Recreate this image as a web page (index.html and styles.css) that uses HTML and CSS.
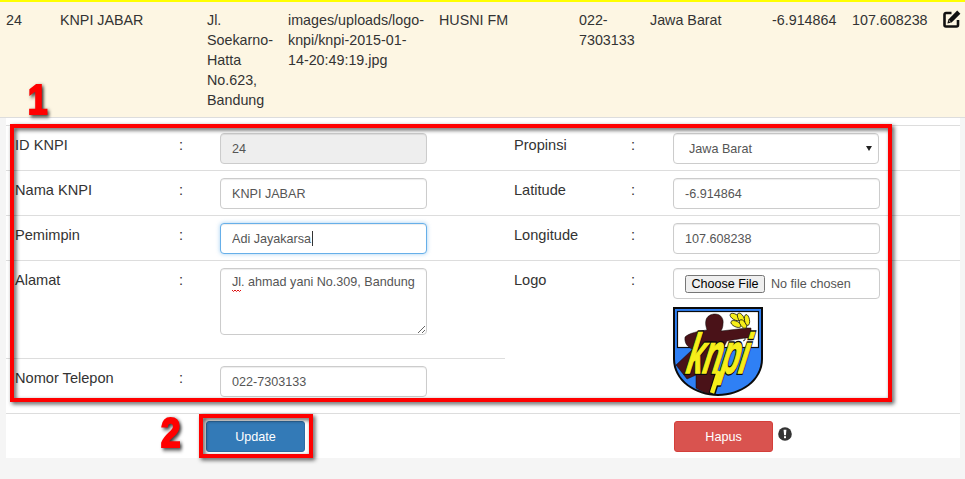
FILE: index.html
```html
<!DOCTYPE html>
<html lang="en">

<head>
    <meta charset="UTF-8">
    <meta name="viewport" content="width=device-width, initial-scale=1.0">
    <title>Data KNPI</title>
    <link rel="stylesheet" href="styles.css">
</head>

<body>
    <div class="page">
        <div class="data-row">
            <div>24</div>
            <div>KNPI JABAR</div>
            <div>Jl. Soekarno-Hatta No.623, Bandung</div>
            <div>images/uploads/logo-knpi/knpi-2015-01-14-20:49:19.jpg</div>
            <div>HUSNI FM</div>
            <div>022-7303133</div>
            <div>Jawa Barat</div>
            <div>-6.914864</div>
            <div>107.608238</div>
            <div>
                <svg class="edit-icon" viewBox="0 0 18 18">
                    <path d="M8.500 3H3A1.500 1.500 0 0 0 1.500 4.500V15A1.500 1.500 0 0 0 3 16.500H13.500A1.500 1.500 0 0 0 15 15V10" fill="none" stroke="#111" stroke-width="2.600" />
                    <path d="M14.200 .6l3.200 3.200-8.800 8.800-4.200 1 1-4.200z" fill="#111" />
                    <path d="M5.900 10.500l1.600 1.600" stroke="#fdf6e3" stroke-width="0.800" />
                </svg>
            </div>
        </div>

        <div class="panel">
            <div class="form-cols">
                <div class="col">
                    <div class="form-row">
                        <label>ID KNPI</label><span class="colon">:</span>
                        <input class="form-control" type="text" value="24" disabled>
                    </div>
                    <div class="form-row">
                        <label>Nama KNPI</label><span class="colon">:</span>
                        <input class="form-control" type="text" value="KNPI JABAR">
                    </div>
                    <div class="form-row">
                        <label>Pemimpin</label><span class="colon">:</span>
                        <div class="field-wrap">
                            <input class="form-control" type="text" value="Adi Jayakarsa" autofocus>
                            <span class="text-caret"></span>
                        </div>
                    </div>
                    <div class="form-row row-alamat">
                        <label>Alamat</label><span class="colon">:</span>
                        <div class="field-wrap">
                            <textarea class="form-control" spellcheck="false">Jl. ahmad yani No.309, Bandung</textarea>
                            <svg class="squiggle" viewBox="0 0 10 3">
                                <path d="M0 1l1.500 1.500L3 1l1.500 1.500L6 1l1.500 1.500L9 1" fill="none" stroke="#e01010" stroke-width="1" />
                            </svg>
                        </div>
                    </div>
                    <div class="form-row row-telepon">
                        <label>Nomor Telepon</label><span class="colon">:</span>
                        <input class="form-control" type="text" value="022-7303133">
                    </div>
                </div>

                <div class="col col-right">
                    <div class="form-row">
                        <label>Propinsi</label><span class="colon">:</span>
                        <div class="field-wrap select-wrap">
                            <select class="form-control select-control">
                                <option>Jawa Barat</option>
                            </select>
                        </div>
                    </div>
                    <div class="form-row">
                        <label>Latitude</label><span class="colon">:</span>
                        <input class="form-control" type="text" value="-6.914864">
                    </div>
                    <div class="form-row">
                        <label>Longitude</label><span class="colon">:</span>
                        <input class="form-control" type="text" value="107.608238">
                    </div>
                    <div class="form-row row-logo">
                        <label>Logo</label><span class="colon">:</span>
                        <div>
                            <input class="form-control file-control" type="file">
                            <svg class="logo" viewBox="0 0 90 90">
                                <defs>
                                    <text id="knpi" class="logo-text" transform="translate(12 66) skewX(-12) scale(.74 1.4)">knpi</text>
                                </defs>
                                <path d="M0 0H90V52C90 74 68 89 45 89C22 89 0 74 0 52Z" fill="#0b0b0b" />
                                <path d="M2 2H88V52C88 73 67 87 45 87C23 87 2 73 2 52Z" fill="#2f80f5" />
                                <rect x="4.500" y="4.500" width="81" height="36" fill="#fff" stroke="#0b0b0b" stroke-width="1.200" />
                                <path d="M42 7C48 7 51 12 50 17C50 20 49 22 48 24L74 21L78 21L78 31L72 31L54 34L50 42L44 62L37 87C32 86 27 84 23 81L23 68L14 72L3 58L20 42C15 41 11 36 12 30C16 26 26 24 34 23C33 20 32 16 33 13C34 9 38 7 42 7Z" fill="#4a1218" stroke="#0b0b0b" stroke-width="0.500" />
                                <g fill="#f6ee1a" stroke="#0b0b0b" stroke-width="0.700">
                                    <ellipse cx="62" cy="10" rx="5.500" ry="2.800" transform="rotate(30 62 10)" />
                                    <ellipse cx="63" cy="17" rx="5.500" ry="2.800" transform="rotate(25 63 17)" />
                                    <ellipse cx="68" cy="11" rx="5.500" ry="2.800" transform="rotate(60 68 11)" />
                                    <ellipse cx="70" cy="17" rx="5" ry="2.600" transform="rotate(55 70 17)" />
                                    <ellipse cx="74" cy="13" rx="5.500" ry="2.500" transform="rotate(80 74 13)" />
                                </g>
                                <path d="M72 31l0 2-2 1" fill="none" stroke="#0b0b0b" stroke-width="0.800" />
                                <path d="M46 64L39 87" stroke="#0b0b0b" stroke-width="7" />
                                <use href="#knpi" class="logo-outline" />
                                <path d="M46 64L39 86" stroke="#f6ee1a" stroke-width="4.500" />
                                <use href="#knpi" class="logo-fill" />
                            </svg>
                        </div>
                    </div>
                </div>
            </div>

            <div class="form-cols actions">
                <div class="action-left">
                    <button class="btn btn-primary" type="button">Update</button>
                </div>
                <div class="action-right">
                    <button class="btn btn-danger" type="button">Hapus</button>
                    <svg class="warn-icon" viewBox="0 0 14 14">
                        <circle cx="7" cy="7" r="6.800" fill="#333" />
                        <path d="M5.600 2.800h2.800L7.900 8.300H6.100z" fill="#fff" />
                        <rect x="6" y="9.200" width="2" height="2" fill="#fff" />
                    </svg>
                </div>
            </div>
        </div>

        <div class="mark mark-form"></div>
        <div class="mark mark-update"></div>
        <span class="mark-num num-one">1</span>
        <span class="mark-num num-two">2</span>
    </div>
</body>

</html>
```

FILE: styles.css
```css
* {
    box-sizing: border-box;
}

body {
    margin: 0;
    background-color: #f5f5f5;
    font-family: "Liberation Sans", Arial, Helvetica, sans-serif;
    font-size: 14.3px;
    line-height: 20px;
    color: #333;
}

.page {
    position: relative;
    height: 479px;
    overflow: hidden;
}

.data-row {
    display: grid;
    grid-template-columns: 54px 147px 81px 151px 140px 71px 122px 80px 91px 22px;
    height: 118px;
    padding: 8px 0 0 6px;
    border-top: 2px solid #ffff00;
    border-bottom: 1px solid #ddd;
    background-color: #fdf6e3;
}

.data-row > div {
    padding-right: 6px;
}

.data-row > div:nth-child(4) {
    padding-right: 13px;
}

.data-row > div:last-child {
    padding-right: 0;
}

.edit-icon {
    display: block;
    width: 18px;
    height: 18px;
}

.panel {
    margin: 0 5px 0 6px;
    padding-top: 7px;
    background-color: #fff;
}

.form-cols {
    display: grid;
    grid-template-columns: 499px 455px;
}

.form-row {
    display: grid;
    grid-template-columns: 165px 40px 207px;
    height: 45px;
    padding: 7px 0 0 9px;
    border-top: 1px solid #ddd;
    font-size: 14.6px;
}

.col-right .form-row {
    grid-template-columns: 118px 41px 207px;
}

.form-row label,
.form-row .colon {
    margin-top: 2px;
}

.form-row .colon {
    margin-left: -1px;
}

.row-alamat {
    height: 98px;
}

.row-telepon {
    height: 55px;
}

.row-logo {
    height: 153px;
}

.form-control {
    display: block;
    width: 207px;
    height: 31px;
    padding: 6px 11px;
    border: 1px solid #ccc;
    border-radius: 4px;
    background-color: #fff;
    box-shadow: inset 0 1px 1px rgba(0, 0, 0, 0.075);
    font-family: inherit;
    font-size: 12.6px;
    color: #555;
}

.form-control:focus {
    border-color: #66afe9;
    outline: none;
    box-shadow: inset 0 1px 1px rgba(0, 0, 0, 0.075), 0 0 4px rgba(102, 175, 233, 0.6);
}

.form-control:disabled {
    background-color: #eee;
}

.field-wrap {
    position: relative;
}

.text-caret {
    position: absolute;
    left: 92px;
    top: 8px;
    width: 1px;
    height: 15px;
    background-color: #333;
}

.select-control {
    width: 206px;
    padding-left: 15px;
    appearance: none;
}

.select-wrap::after {
    content: "";
    position: absolute;
    left: 193px;
    top: 13px;
    border-top: 5px solid #222;
    border-left: 3px solid transparent;
    border-right: 3px solid transparent;
}

textarea.form-control {
    height: 67px;
    resize: vertical;
}

.squiggle {
    position: absolute;
    left: 12px;
    top: 21px;
    width: 10px;
    height: 3px;
}

.file-control {
    padding: 6px 11px;
}

.file-control::file-selector-button {
    width: 80px;
    height: 18px;
    margin-right: 6px;
    padding: 0;
    font-size: 12.6px;
}

.logo {
    display: block;
    width: 90px;
    height: 90px;
    margin-top: 8px;
}

.logo-text {
    font-family: "Liberation Sans", Arial, sans-serif;
    font-size: 40px;
    font-weight: 700;
    font-style: italic;
}

.logo-outline {
    fill: #0b0b0b;
    stroke: #0b0b0b;
    stroke-width: 3px;
}

.logo-fill {
    fill: #f6ee1a;
    stroke: #f6ee1a;
    stroke-width: 1px;
}

.actions {
    height: 45px;
    border-top: 1px solid #ddd;
}

.action-left {
    padding: 7px 0 0 200px;
}

.action-right {
    display: flex;
    align-items: flex-start;
    padding: 7px 0 0 169px;
}

.btn {
    width: 99px;
    height: 31px;
    padding: 0;
    border: 1px solid transparent;
    border-radius: 3px;
    font-family: inherit;
    font-size: 12.6px;
    color: #fff;
}

.btn-primary {
    border-color: #2e6da4;
    background-color: #337ab7;
}

.btn-danger {
    border-color: #d43f3a;
    background-color: #d9534f;
}

.warn-icon {
    width: 14px;
    height: 14px;
    margin: 6px 0 0 5px;
}

/* annotations on top of the screenshot */
.mark {
    position: absolute;
    border: 4px solid #f00;
    filter: drop-shadow(2px 2px 2px rgba(0, 0, 0, 0.7));
}

.mark-form {
    left: 10px;
    top: 124px;
    width: 882px;
    height: 278px;
}

.mark-update {
    left: 199px;
    top: 414px;
    width: 114px;
    height: 44px;
}

.mark-num {
    position: absolute;
    font-size: 42px;
    line-height: 42px;
    font-weight: 700;
    color: #f00;
    -webkit-text-stroke: 2px #f00;
    filter: drop-shadow(2px 2px 2px rgba(0, 0, 0, 0.8));
    transform: scaleX(0.85);
}

.num-one {
    left: 26px;
    top: 79px;
}

.num-two {
    left: 159px;
    top: 412px;
}
```
